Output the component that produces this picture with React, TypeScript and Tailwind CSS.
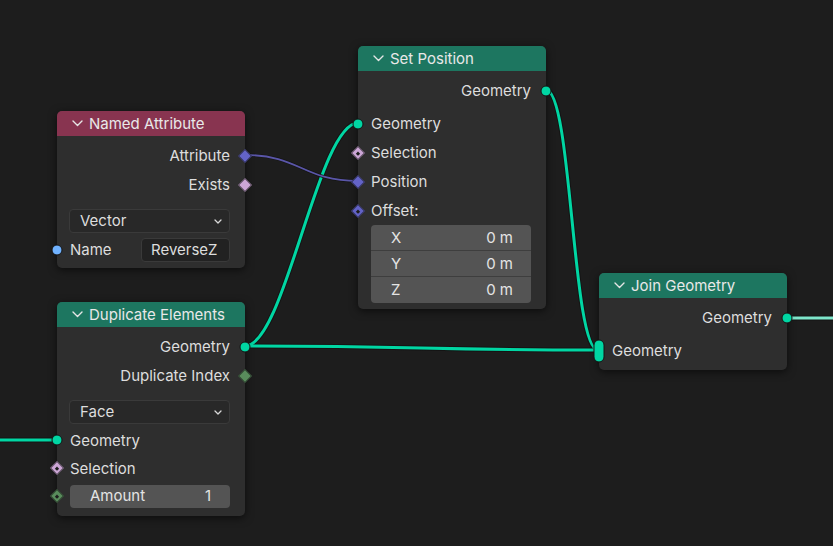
import React from "react";

const GEO = "#00d6a3";
const VEC = "#6363c7";
const BOOL = "#cca6d6";
const INT = "#598c5c";
const STR = "#70b2ff";

type SockKind = "circle" | "diamond" | "diamondDot" | "pill";

function Socket({ kind, color, side }: { kind: SockKind; color: string; side: "l" | "r" }) {
  const pos = side === "l" ? "left-0 -translate-x-1/2" : "right-0 translate-x-1/2";
  if (kind === "circle") {
    return (
      <span
        className={`absolute top-1/2 -translate-y-1/2 ${pos} w-[11px] h-[11px] rounded-full border border-[#141414]`}
        style={{ backgroundColor: color }}
      />
    );
  }
  if (kind === "pill") {
    return (
      <span
        className={`absolute top-1/2 -translate-y-1/2 ${pos} w-[11px] h-[23px] rounded-full border border-[#141414]`}
        style={{ backgroundColor: color }}
      />
    );
  }
  return (
    <span className={`absolute top-1/2 -translate-y-1/2 ${pos} w-[16px] h-[16px] flex items-center justify-center`}>
      <span
        className="block shrink-0 w-[10px] h-[10px] rotate-45 border border-[rgba(20,20,20,0.6)] flex items-center justify-center"
        style={{ backgroundColor: color }}
      >
        {kind === "diamondDot" && <span className="block w-[3px] h-[3px] bg-[#1e1e1e]" />}
      </span>
    </span>
  );
}

function OutRow({ label, kind, color, h = "h-[29px]" }: { label: string; kind: SockKind; color: string; h?: string }) {
  return (
    <div className={`relative ${h} flex items-center justify-end pr-[15px]`}>
      <span className="pt-[2px]">{label}</span>
      <Socket kind={kind} color={color} side="r" />
    </div>
  );
}

function InRow({ label, kind, color, h = "h-[29px]" }: { label: string; kind: SockKind; color: string; h?: string }) {
  return (
    <div className={`relative ${h} flex items-center pl-[13px]`}>
      <span className="pt-[2px]">{label}</span>
      <Socket kind={kind} color={color} side="l" />
    </div>
  );
}

function Chevron({ className = "" }: { className?: string }) {
  return (
    <svg className={className} width="11" height="7" viewBox="0 0 11 7" fill="none">
      <path d="M1 1 L5.5 5.5 L10 1" stroke="#e6e6e6" strokeWidth="1.4" strokeLinecap="round" strokeLinejoin="round" />
    </svg>
  );
}

function SmallChevron() {
  return (
    <svg width="8" height="5" viewBox="0 0 8 5" fill="none">
      <path d="M1 1 L4 4 L7 1" stroke="#d8d8d8" strokeWidth="1.3" strokeLinecap="round" strokeLinejoin="round" />
    </svg>
  );
}

function Node({
  left,
  top,
  title,
  header,
  children,
}: {
  left: number;
  top: number;
  title: string;
  header: string;
  children: React.ReactNode;
}) {
  return (
    <div
      className="absolute w-[188px] rounded-[5px] bg-[#2e2e2e] shadow-[0_2px_8px_rgba(0,0,0,0.6)] text-[15px] text-[#dddddd]"
      style={{ left, top }}
    >
      <div
        className="h-[25px] rounded-t-[5px] flex items-center pl-[15px] gap-[6px] text-[#e8e8e8]"
        style={{ backgroundColor: header }}
      >
        <Chevron />
        <span className="pt-[2px]">{title}</span>
      </div>
      {children}
    </div>
  );
}

function Dropdown({ label }: { label: string }) {
  return (
    <div className="ml-[12px] mr-[15px] h-[24px] rounded-[4px] bg-[#282828] border border-[#3a3a3a] flex items-center justify-between pl-[10px] pr-[7px]">
      <span className="pt-[1px]">{label}</span>
      <SmallChevron />
    </div>
  );
}

export default function App() {
  return (
    <div
      className="relative w-[833px] h-[546px] overflow-hidden bg-[#1d1d1d]"
      style={{ fontFamily: "Inter, 'Noto Sans', sans-serif" }}
    >
      <svg className="absolute inset-0" width="833" height="546" viewBox="0 0 833 546" fill="none">
        <g stroke="#141414" strokeWidth="5" strokeLinecap="round">
          <path d="M0 440 L57 440" />
          <path d="M245 346 C285 346 318 123 358 123" />
          <path d="M245 346 C420 346 423 350 598 350" />
          <path d="M546 90 C572 90 572 350 598 350" />
          <path d="M787 318 L833 318" />
        </g>
        <g stroke={GEO} strokeWidth="3" strokeLinecap="round">
          <path d="M0 440 L57 440" />
          <path d="M245 346 C285 346 318 123 358 123" />
          <path d="M245 346 C420 346 423 350 598 350" />
          <path d="M546 90 C572 90 572 350 598 350" />
        </g>
        <path d="M787 318 L833 318" stroke="#7ee6cb" strokeWidth="3" />
        <path d="M245 155 C300 155 303 181 358 181" stroke="#141414" strokeWidth="3.2" />
        <path d="M245 155 C300 155 303 181 358 181" stroke="#5a56a8" strokeWidth="1.8" />
      </svg>

      {/* Named Attribute */}
      <Node left={57} top={111} title="Named Attribute" header="#883450">
        <div className="pt-[5px]" />
        <OutRow label="Attribute" kind="diamond" color={VEC} />
        <OutRow label="Exists" kind="diamond" color={BOOL} />
        <div className="mt-[10px]">
          <Dropdown label="Vector" />
        </div>
        <div className="relative mt-[5px] h-[24px] flex items-center pl-[13px] pr-[15px] mb-[6px]">
          <span className="w-[71px] pt-[1px]">Name</span>
          <div className="flex-1 h-[24px] rounded-[4px] bg-[#222222] border border-[#3a3a3a] flex items-center pl-[9px] pt-[1px]">
            ReverseZ
          </div>
          <Socket kind="circle" color={STR} side="l" />
        </div>
      </Node>

      {/* Set Position */}
      <Node left={358} top={46} title="Set Position" header="#1d7660">
        <div className="pt-[5px]" />
        <OutRow label="Geometry" kind="circle" color={GEO} />
        <div className="h-[4px]" />
        <InRow label="Geometry" kind="circle" color={GEO} />
        <InRow label="Selection" kind="diamondDot" color={BOOL} />
        <InRow label="Position" kind="diamond" color={VEC} />
        <InRow label="Offset:" kind="diamondDot" color={VEC} />
        <div className="ml-[13px] mr-[15px] rounded-[4px] bg-[#545454] overflow-hidden text-[#e4e4e4]">
          {["X", "Y", "Z"].map((a, i) => (
            <div
              key={a}
              className={`h-[26px] flex items-center justify-between pl-[20px] pr-[18px] pt-[1px] ${
                i < 2 ? "border-b border-[#3e3e3e]" : ""
              }`}
            >
              <span>{a}</span>
              <span>0 m</span>
            </div>
          ))}
        </div>
        <div className="h-[6px]" />
      </Node>

      {/* Duplicate Elements */}
      <Node left={57} top={302} title="Duplicate Elements" header="#1d7660">
        <div className="pt-[5px]" />
        <OutRow label="Geometry" kind="circle" color={GEO} />
        <OutRow label="Duplicate Index" kind="diamond" color={INT} />
        <div className="mt-[10px]">
          <Dropdown label="Face" />
        </div>
        <div className="h-[2px]" />
        <InRow label="Geometry" kind="circle" color={GEO} h="h-[28px]" />
        <InRow label="Selection" kind="diamondDot" color={BOOL} h="h-[28px]" />
        <div className="relative h-[28px] flex items-center pl-[13px] pr-[15px]">
          <div className="flex-1 h-[23px] rounded-[4px] bg-[#545454] flex items-center justify-between pl-[20px] pr-[19px] pt-[1px] text-[#e4e4e4]">
            <span>Amount</span>
            <span>1</span>
          </div>
          <Socket kind="diamondDot" color={INT} side="l" />
        </div>
        <div className="h-[6px]" />
      </Node>

      {/* Join Geometry */}
      <Node left={599} top={273} title="Join Geometry" header="#1d7660">
        <div className="pt-[5px]" />
        <OutRow label="Geometry" kind="circle" color={GEO} />
        <div className="h-[4px]" />
        <InRow label="Geometry" kind="pill" color={GEO} />
        <div className="h-[5px]" />
      </Node>
    </div>
  );
}
